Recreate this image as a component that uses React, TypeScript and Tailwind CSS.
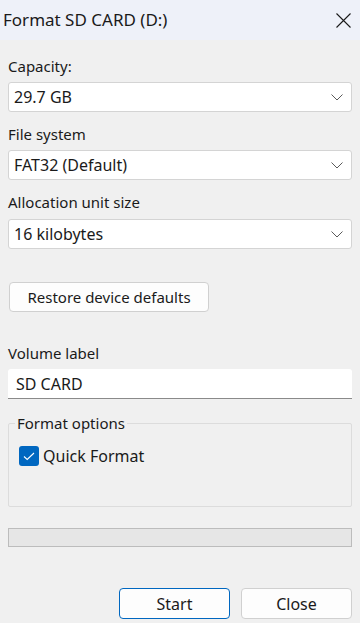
import React from 'react';

const font = { fontFamily: '"Noto Sans", "Open Sans", sans-serif' };

const Chevron = () => (
  <svg width="12" height="7" viewBox="0 0 12 7" className="shrink-0">
    <polyline points="0.5,0.5 6,6 11.5,0.5" fill="none" stroke="#5a5a5a" strokeWidth="1" />
  </svg>
);

const Select = ({ value }: { value: string }) => (
  <div className="h-[30px] bg-white border border-[#d4d4d4] rounded-[3px] flex items-center justify-between pl-[5px] pr-[8px]">
    <span className="text-[16px] text-[#1a1a1a] leading-none">{value}</span>
    <Chevron />
  </div>
);

const Label = ({ children, className = '' }: { children: React.ReactNode; className?: string }) => (
  <div className={`h-[20px] leading-[20px] text-[15px] text-[#1a1a1a] ${className}`}>{children}</div>
);

export default function App() {
  return (
    <div className="w-[360px] h-[623px] bg-[#f0f0f0] flex flex-col overflow-hidden" style={font}>
      {/* title bar */}
      <div className="h-[40px] bg-[#eef1f9] flex items-center justify-between pl-[3px] pr-[9px] shrink-0">
        <span className="text-[17px] text-[#1a1a1a]">Format SD CARD (D:)</span>
        <svg width="15" height="15" viewBox="0 0 15 15">
          <path d="M0.5 0.5 L14.5 14.5 M14.5 0.5 L0.5 14.5" stroke="#1a1a1a" strokeWidth="1.1" />
        </svg>
      </div>

      <div className="flex-1 flex flex-col px-[8px] pt-[16px]">
        <Label className="mb-[6px]">Capacity:</Label>
        <Select value="29.7 GB" />

        <Label className="mt-[12px] mb-[6px]">File system</Label>
        <Select value="FAT32 (Default)" />

        <Label className="mt-[12px] mb-[7px]">Allocation unit size</Label>
        <Select value="16 kilobytes" />

        <button className="mt-[33px] ml-[1px] w-[200px] h-[30px] bg-[#fdfdfd] border border-[#d0d0d0] rounded-[4px] text-[15px] text-[#1a1a1a]">
          Restore device defaults
        </button>

        <Label className="mt-[31px] mb-[6px]">Volume label</Label>
        <div className="h-[30px] bg-white border-b border-[#8a8a8a] rounded-t-[3px] flex items-center pl-[8px]">
          <span className="text-[16px] text-[#1a1a1a] leading-none">SD CARD</span>
        </div>

        <fieldset className="mt-[14px] h-[94px] border border-[#dcdcdc] rounded-[2px] pl-[6px] pr-[6px] pt-0 pb-0 m-0">
          <legend className="px-[2px] h-[20px] leading-[20px] text-[15px] text-[#1a1a1a]">Format options</legend>
          <div className="flex items-center pl-[4px] mt-[13px] gap-[4px]">
            <div className="w-[20px] h-[20px] rounded-[3px] bg-[#0067c0] flex items-center justify-center">
              <svg width="12" height="9" viewBox="0 0 12 9">
                <polyline points="1,4.5 4.2,7.5 11,1" fill="none" stroke="#ffffff" strokeWidth="1.1" />
              </svg>
            </div>
            <span className="text-[16px] text-[#1a1a1a] leading-[20px]">Quick Format</span>
          </div>
        </fieldset>

        <div className="mt-[21px] h-[19px] bg-[#e6e6e6] border border-[#bcbcbc]" />

        <div className="mt-[41px] flex justify-end gap-[11px]">
          <button className="w-[111px] h-[31px] bg-[#fdfdfd] border border-[#0067c0] rounded-[4px] text-[16px] text-[#1a1a1a]">
            Start
          </button>
          <button className="w-[111px] h-[31px] bg-[#fdfdfd] border border-[#d0d0d0] rounded-[4px] text-[16px] text-[#1a1a1a]">
            Close
          </button>
        </div>
      </div>
    </div>
  );
}
